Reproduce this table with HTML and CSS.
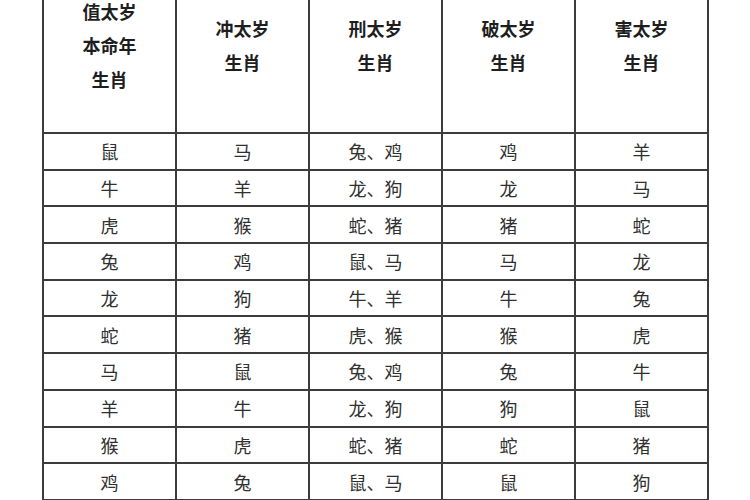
FILE: index.html
```html
<!DOCTYPE html>
<html lang="zh-CN">
<head>
<meta charset="utf-8">
<link rel="stylesheet" href="styles.css">
</head>
<body>
<table class="tbl">
  <colgroup>
    <col class="c"><col class="c"><col class="c"><col class="c"><col class="c">
  </colgroup>
  <thead>
    <tr class="head">
      <th>值太岁<br>本命年<br>生肖</th>
      <th>冲太岁<br>生肖</th>
      <th>刑太岁<br>生肖</th>
      <th>破太岁<br>生肖</th>
      <th>害太岁<br>生肖</th>
    </tr>
  </thead>
  <tbody>
    <tr><td>鼠</td><td>马</td><td>兔、鸡</td><td>鸡</td><td>羊</td></tr>
    <tr><td>牛</td><td>羊</td><td>龙、狗</td><td>龙</td><td>马</td></tr>
    <tr><td>虎</td><td>猴</td><td>蛇、猪</td><td>猪</td><td>蛇</td></tr>
    <tr><td>兔</td><td>鸡</td><td>鼠、马</td><td>马</td><td>龙</td></tr>
    <tr><td>龙</td><td>狗</td><td>牛、羊</td><td>牛</td><td>兔</td></tr>
    <tr><td>蛇</td><td>猪</td><td>虎、猴</td><td>猴</td><td>虎</td></tr>
    <tr><td>马</td><td>鼠</td><td>兔、鸡</td><td>兔</td><td>牛</td></tr>
    <tr><td>羊</td><td>牛</td><td>龙、狗</td><td>狗</td><td>鼠</td></tr>
    <tr><td>猴</td><td>虎</td><td>蛇、猪</td><td>蛇</td><td>猪</td></tr>
    <tr><td>鸡</td><td>兔</td><td>鼠、马</td><td>鼠</td><td>狗</td></tr>
  </tbody>
</table>
</body>
</html>
```

FILE: styles.css
```css
html, body {
  margin: 0;
  padding: 0;
  background: #ffffff;
  overflow: hidden;
}
body {
  width: 750px;
  height: 500px;
  font-family: "Noto Sans CJK SC", "Noto Sans", sans-serif;
  color: #262626;
}
.tbl {
  border-collapse: collapse;
  table-layout: fixed;
  margin-left: 42px;
  margin-top: -45px;
  width: 665px;
}
.c {
  width: 133px;
}
.tbl th,
.tbl td {
  border: 2px solid #3c3c3c;
  padding: 0;
  text-align: center;
  vertical-align: middle;
}
.head th {
  height: 175px;
  font-size: 18px;
  font-weight: 700;
  line-height: 34px;
  color: #1e1e1e;
}
.tbl td {
  height: 34.7px;
  font-size: 18px;
  font-weight: 400;
  line-height: 20px;
  color: #303030;
}
```
